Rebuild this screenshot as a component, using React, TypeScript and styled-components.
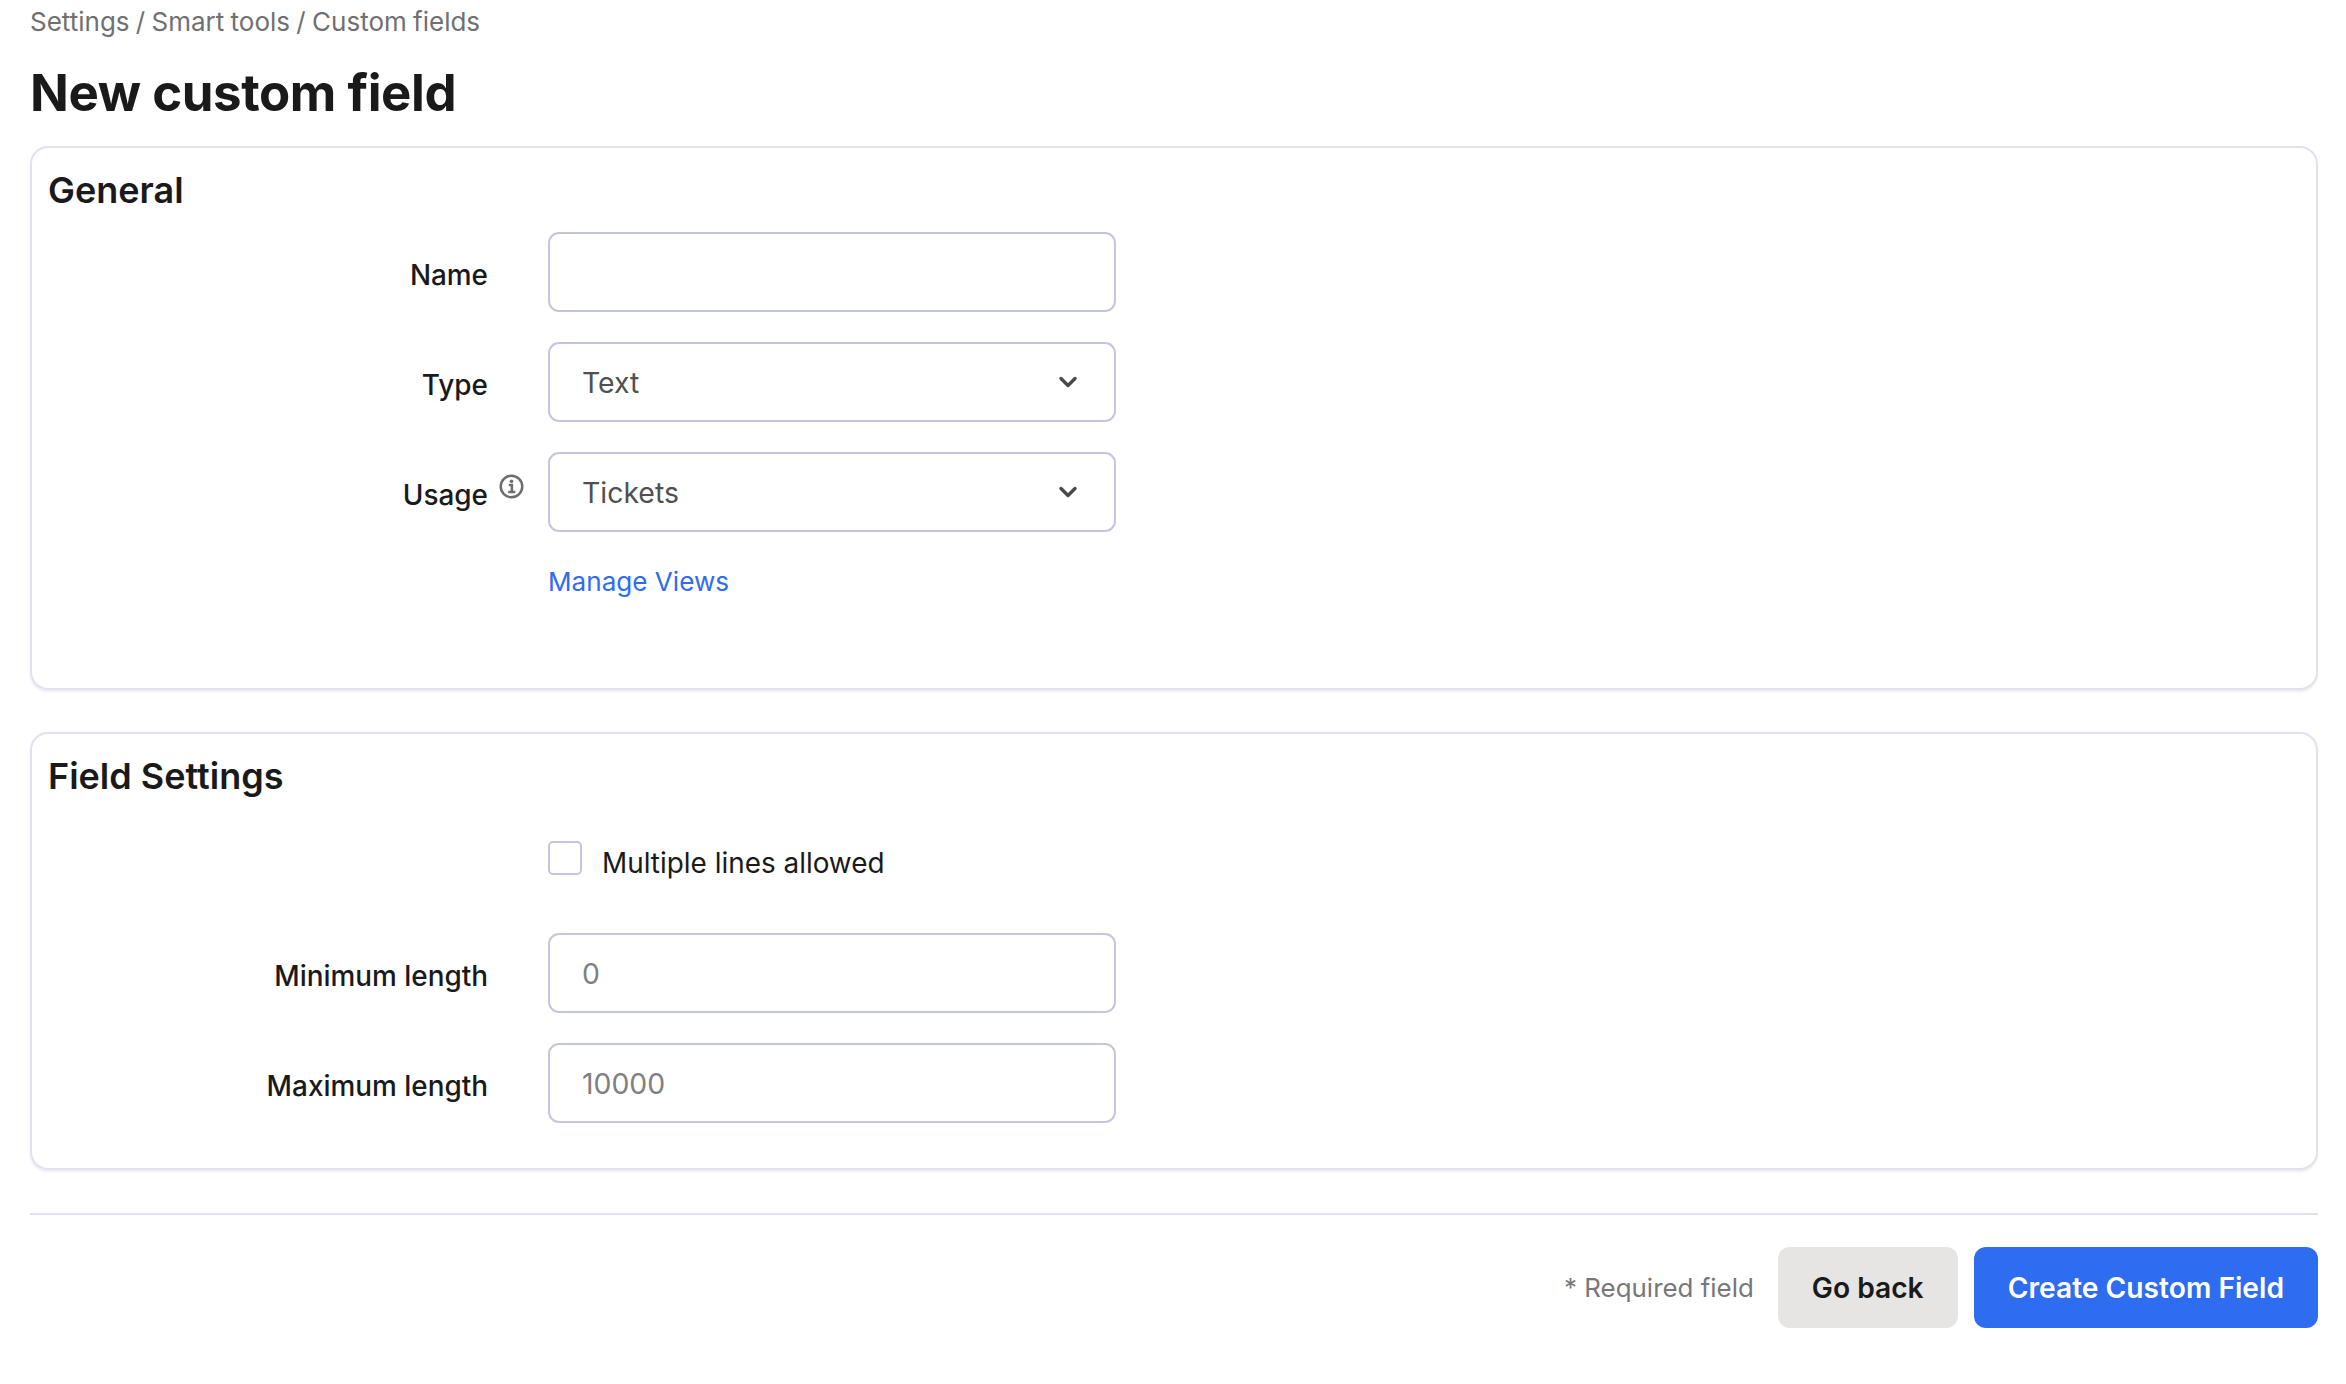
import React from "react";
import styled, { createGlobalStyle } from "styled-components";

const Global = createGlobalStyle`
  html, body { margin: 0; padding: 0; background: #fff; }
  body { font-family: Inter, "Liberation Sans", sans-serif; color: #1a1a1a; }
  * { box-sizing: border-box; }
`;

const Page = styled.div`
  padding: 0 28px 0 30px;
  display: flex;
  flex-direction: column;
`;

const Breadcrumb = styled.div`
  font-size: 26px;
  word-spacing: -1px;
  line-height: 30px;
  padding-top: 7px;
  color: #707070;
`;

const Title = styled.h1`
  margin: 26px 0 0;
  font-size: 51px;
  letter-spacing: -0.45px;
  line-height: 60px;
  font-weight: 700;
  color: #1a1a1a;
`;

const Card = styled.section<{ $height: number; $top: number }>`
  margin-top: ${(p) => p.$top}px;
  height: ${(p) => p.$height}px;
  border: 2px solid #e0e2ef;
  border-radius: 18px;
  box-shadow: 0 1.5px 2px rgba(30, 30, 80, 0.08);
  padding: 20px 16px 0;
`;

const CardTitle = styled.h2`
  margin: 0;
  font-size: 36px;
  line-height: 44px;
  font-weight: 600;
  color: #1a1a1a;
`;

const Rows = styled.div<{ $top: number }>`
  margin-top: ${(p) => p.$top}px;
  display: flex;
  flex-direction: column;
  gap: 30px;
`;

const Row = styled.div`
  display: grid;
  grid-template-columns: 440px 1fr;
  column-gap: 60px;
`;

const Label = styled.label`
  display: flex;
  justify-content: flex-end;
  align-items: center;
  position: relative;
  height: 80px;
  padding-top: 5px;
  font-size: 27.9px;
  font-weight: 500;
  color: #1a1a1a;
`;

const InfoBadge = styled.span`
  position: absolute;
  right: -36px;
  top: 22px;
  width: 25px;
  height: 25px;
  color: #6e6e6e;
  display: flex;
`;

const fieldBox = `
  width: 568px;
  height: 80px;
  border: 2px solid #c4c6dd;
  border-radius: 11px;
  background: #fff;
  padding: 0 32px;
  font-family: Inter, "Liberation Sans", sans-serif;
  font-size: 28.4px;
`;

const TextInput = styled.input`
  ${fieldBox}
  display: block;
  color: #505050;
  outline: none;
  &::placeholder { color: #808080; opacity: 1; }
`;

const SelectBox = styled.button`
  ${fieldBox}
  display: flex;
  align-items: center;
  justify-content: space-between;
  color: #505050;
  padding-right: 34px;
  text-align: left;
`;

const Chevron = styled.svg`
  width: 24px;
  height: 24px;
  color: #4a4a4a;
  flex: none;
`;

const LinkRow = styled.div`
  padding-left: 500px;
  margin-top: 32px;
`;

const ManageLink = styled.a`
  font-size: 26.1px;
  line-height: 36px;
  color: #2e6cf0;
  text-decoration: none;
`;

const CheckRow = styled.div`
  padding-left: 500px;
  display: flex;
  align-items: flex-start;
  gap: 20px;
  margin-top: 43px;
  height: 92px;
`;

const CheckBox = styled.input`
  appearance: none;
  margin: 0;
  width: 34px;
  height: 34px;
  border: 2px solid #c4c6dd;
  border-radius: 5px;
  background: #fff;
  flex: none;
`;

const CheckLabel = styled.label`
  font-size: 27.9px;
  line-height: 44px;
  color: #1a1a1a;
`;

const Divider = styled.hr`
  margin: 43px 0 0;
  border: 0;
  border-top: 2px solid #e0e2ef;
`;

const Footer = styled.footer`
  margin-top: 32px;
  display: flex;
  justify-content: flex-end;
  align-items: center;
`;

const Required = styled.span`
  font-size: 25.9px;
  color: #787878;
  margin-right: 24px;
`;

const Button = styled.button<{ $primary?: boolean }>`
  height: 81px;
  border: 0;
  border-radius: 12px;
  padding: 0 34px;
  font-family: Inter, "Liberation Sans", sans-serif;
  font-size: 28.2px;
  font-weight: 600;
  color: ${(p) => (p.$primary ? "#fff" : "#1a1a1a")};
  background: ${(p) => (p.$primary ? "#2e6cf0" : "#e6e5e3")};
  margin-left: ${(p) => (p.$primary ? "16px" : "0")};
`;

const ChevronIcon = () => (
  <Chevron viewBox="0 0 24 24" fill="none" stroke="currentColor" strokeWidth="3.4" strokeLinecap="round" strokeLinejoin="round">
    <path d="M5 8.5l7 7 7-7" />
  </Chevron>
);

const InfoIcon = () => (
  <InfoBadge>
    <svg viewBox="0 0 26 26" width="25" height="25" fill="none" stroke="currentColor">
      <circle cx="13" cy="13" r="11.2" strokeWidth="2.6" />
      <path d="M10.2 11.4h3.2v7M9.6 18.6h7.4" strokeWidth="2.6" />
      <circle cx="13" cy="7.6" r="1.9" fill="currentColor" stroke="none" />
    </svg>
  </InfoBadge>
);

export default function App() {
  return (
    <Page>
      <Global />
      <Breadcrumb>Settings / Smart tools / Custom fields</Breadcrumb>
      <Title>New custom field</Title>
      <Card $top={23} $height={544}>
        <CardTitle>General</CardTitle>
        <Rows $top={20}>
          <Row>
            <Label>Name</Label>
            <TextInput aria-label="Name" />
          </Row>
          <Row>
            <Label>Type</Label>
            <SelectBox type="button">
              Text
              <ChevronIcon />
            </SelectBox>
          </Row>
          <Row>
            <Label>
              Usage
              <InfoIcon />
            </Label>
            <SelectBox type="button">
              Tickets
              <ChevronIcon />
            </SelectBox>
          </Row>
        </Rows>
        <LinkRow>
          <ManageLink href="#">Manage Views</ManageLink>
        </LinkRow>
      </Card>
      <Card $top={42} $height={438}>
        <CardTitle>Field Settings</CardTitle>
        <CheckRow>
          <CheckBox type="checkbox" id="multi" />
          <CheckLabel htmlFor="multi">Multiple lines allowed</CheckLabel>
        </CheckRow>
        <Rows $top={0}>
          <Row>
            <Label>Minimum length</Label>
            <TextInput placeholder="0" aria-label="Minimum length" />
          </Row>
          <Row>
            <Label>Maximum length</Label>
            <TextInput placeholder="10000" aria-label="Maximum length" />
          </Row>
        </Rows>
      </Card>
      <Divider />
      <Footer>
        <Required>* Required field</Required>
        <Button type="button">Go back</Button>
        <Button type="button" $primary>
          Create Custom Field
        </Button>
      </Footer>
    </Page>
  );
}
